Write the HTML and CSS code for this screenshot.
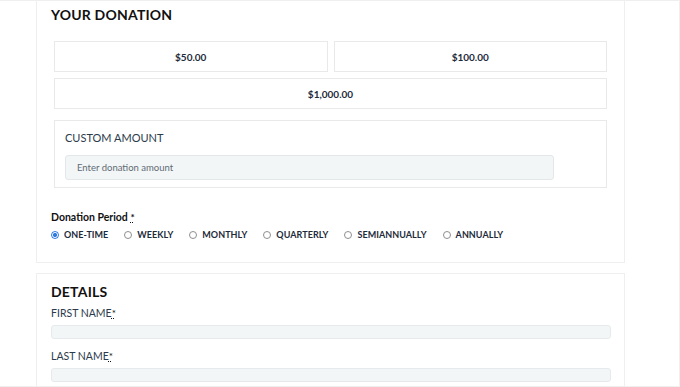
FILE: index.html
```html
<!DOCTYPE html>
<html>
<head>
<meta charset="utf-8">
<link rel="stylesheet" href="styles.css">
</head>
<body>
<div class="frame">
  <section class="card card-donation">
    <h2 class="card-title">YOUR DONATION</h2>
    <div class="amounts">
      <button class="amount">$50.00</button>
      <button class="amount">$100.00</button>
      <button class="amount amount-wide">$1,000.00</button>
    </div>
    <div class="custom">
      <div class="custom-label">CUSTOM AMOUNT</div>
      <input class="custom-input" type="text" placeholder="Enter donation amount">
    </div>
    <div class="period">
      <div class="period-label">Donation Period <abbr class="req">*</abbr></div>
      <div class="radios">
        <label class="radio"><input type="radio" name="p" checked><span>ONE-TIME</span></label>
        <label class="radio"><input type="radio" name="p"><span>WEEKLY</span></label>
        <label class="radio"><input type="radio" name="p"><span>MONTHLY</span></label>
        <label class="radio"><input type="radio" name="p"><span>QUARTERLY</span></label>
        <label class="radio"><input type="radio" name="p"><span>SEMIANNUALLY</span></label>
        <label class="radio"><input type="radio" name="p"><span>ANNUALLY</span></label>
      </div>
    </div>
  </section>
  <section class="card card-details">
    <h2 class="card-title">DETAILS</h2>
    <div class="field">
      <div class="field-label">FIRST NAME<abbr class="req">*</abbr></div>
      <input class="field-input" type="text">
    </div>
    <div class="field">
      <div class="field-label">LAST NAME<abbr class="req">*</abbr></div>
      <input class="field-input" type="text">
    </div>
  </section>
</div>
</body>
</html>
```

FILE: styles.css
```css
* { box-sizing: border-box; }
html, body { margin: 0; padding: 0; background: #fff; }
body { font-family: Lato, "Open Sans", sans-serif; color: #1d2b3a; }

.frame {
  width: 680px;
  height: 387px;
  border: 1px solid #efefef;
  border-left: none;
  padding-left: 36px;
  overflow: hidden;
  display: flex;
  flex-direction: column;
  gap: 10px;
}

.card {
  width: 589px;
  border: 1px solid #efefef;
  background: #fff;
  padding: 0 14px 0 14px;
}
.card-donation { border-top: none; height: 262px; padding-top: 6px; }
.card-details { flex: 1; padding-top: 10px; border-bottom: none; }

.card-title {
  margin: 0;
  font-size: 14px;
  line-height: 16px;
  font-weight: 700;
  color: #111;
  letter-spacing: 0.2px;
}

.amounts {
  margin: 18px 3px 0 3px;
  display: grid;
  grid-template-columns: 1fr 1fr;
  gap: 6px 6px;
}
.amount {
  height: 31px;
  border: 1px solid #e9e9e9;
  background: #fff;
  font-family: Lato, sans-serif;
  font-weight: 700;
  font-size: 10px;
  color: #1d2b3a;
  padding: 0;
}
.amount-wide { grid-column: 1 / 3; }

.custom {
  margin: 11px 3px 0 3px;
  border: 1px solid #e9e9e9;
  height: 68px;
  padding: 10px 10px 0 10px;
}
.custom-label {
  font-size: 11px;
  line-height: 14px;
  color: #2b3b4c;
}
.custom-input {
  display: block;
  margin-top: 10px;
  width: 489px;
  height: 25px;
  border: 1px solid #e3e7e9;
  border-radius: 3px;
  background: #f3f6f7;
  padding: 0 11px;
  font-family: Lato, sans-serif;
  font-size: 9.5px;
  color: #333;
}
.custom-input::placeholder { color: #5f6b75; }

.period { margin-top: 23px; }
.period-label {
  font-size: 10.5px;
  font-weight: 700;
  color: #111;
  line-height: 13px;
}
.req {
  text-decoration: underline dotted;
  color: #111;
  font-size: 10px;
}
.radios {
  margin-top: 5px;
  display: flex;
  gap: 16px;
}
.radio {
  display: flex;
  align-items: center;
  gap: 5px;
  font-size: 9px;
  font-weight: 700;
  color: #1d2b3a;
  letter-spacing: 0.05px;
}
.radio input {
  appearance: none;
  -webkit-appearance: none;
  margin: 0;
  width: 8px;
  height: 8px;
  border-radius: 50%;
  border: 1px solid #8f8f8f;
  background: #fff;
}
.radio input:checked {
  border-color: #2f7be0;
  background: radial-gradient(circle, #2f7be0 0 2px, #fff 2.2px 3px, #2f7be0 3.2px);
}

.field { margin-top: 6px; }
.field-label {
  font-size: 10.5px;
  line-height: 14px;
  color: #2b3b4c;
}
.field-input {
  display: block;
  margin-top: 5px;
  width: 560px;
  height: 14px;
  border: 1px solid #e6eaec;
  border-radius: 3px;
  background: #f3f6f7;
  padding: 0;
}
.field + .field { margin-top: 10px; }
```
